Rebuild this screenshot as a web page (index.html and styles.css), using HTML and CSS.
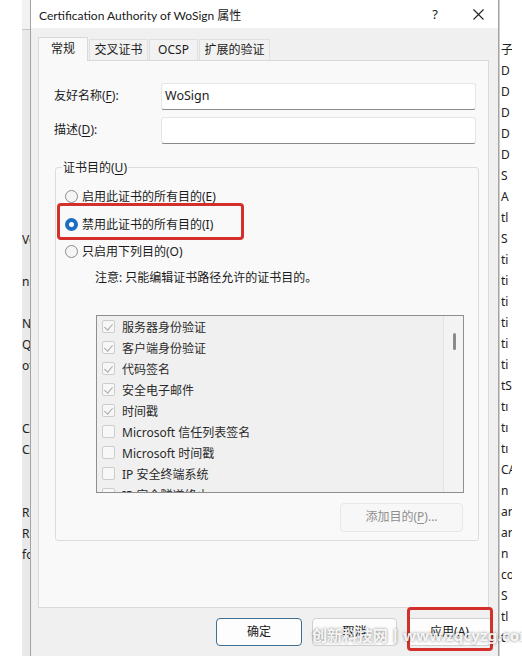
FILE: index.html
```html
<!DOCTYPE html>
<html lang="zh-CN">
<head>
<meta charset="utf-8">
<title>Certification Authority of WoSign 属性</title>
<link rel="stylesheet" href="styles.css">
</head>
<body>
<div class="screen">

    <!-- window behind, left side -->
    <div class="bg-left">
        <div class="bg-band"></div>
        <div class="bg-col">
            <div class="bg-row">Vo</div>
            <div class="bg-row"></div>
            <div class="bg-row">ne</div>
            <div class="bg-row"></div>
            <div class="bg-row">N</div>
            <div class="bg-row">Q</div>
            <div class="bg-row">ot</div>
            <div class="bg-row"></div>
            <div class="bg-row"></div>
            <div class="bg-row">CA</div>
            <div class="bg-row">CA</div>
            <div class="bg-row"></div>
            <div class="bg-row"></div>
            <div class="bg-row">Ro</div>
            <div class="bg-row">Ro</div>
            <div class="bg-row">fo</div>
        </div>
    </div>

    <div class="dialog">
        <div class="titlebar">
            <span class="title">Certification Authority of WoSign 属性</span>
            <span class="tb-btn help">?</span>
            <span class="tb-btn close">
                <svg width="11" height="11" viewBox="0 0 11 11"><path d="M0.5 0.5 L10.5 10.5 M10.5 0.5 L0.5 10.5" stroke="#222" stroke-width="1.1" fill="none"/></svg>
            </span>
        </div>

        <div class="dlg-body">
            <div class="tabs">
                <div class="tab active">常规</div>
                <div class="tab">交叉证书</div>
                <div class="tab">OCSP</div>
                <div class="tab">扩展的验证</div>
            </div>

            <div class="panel">
                <div class="field-row first">
                    <label class="field-label">友好名称(<u>F</u>):</label>
                    <div class="input">WoSign</div>
                </div>
                <div class="field-row">
                    <label class="field-label">描述(<u>D</u>):</label>
                    <div class="input"></div>
                </div>

                <div class="group">
                    <div class="group-title">证书目的(<u>U</u>)</div>

                    <div class="radio-row r1"><span class="radio"></span>启用此证书的所有目的(E)</div>
                    <div class="radio-row r2"><span class="radio on"></span>禁用此证书的所有目的(I)</div>
                    <div class="radio-row r3"><span class="radio"></span>只启用下列目的(O)</div>

                    <div class="note">注意: 只能编辑证书路径允许的证书目的。</div>

                    <div class="listbox">
                        <div class="list-items">
                            <div class="item"><span class="chk on"></span>服务器身份验证</div>
                            <div class="item"><span class="chk on"></span>客户端身份验证</div>
                            <div class="item"><span class="chk on"></span>代码签名</div>
                            <div class="item"><span class="chk on"></span>安全电子邮件</div>
                            <div class="item"><span class="chk on"></span>时间戳</div>
                            <div class="item"><span class="chk"></span>Microsoft 信任列表签名</div>
                            <div class="item"><span class="chk"></span>Microsoft 时间戳</div>
                            <div class="item"><span class="chk"></span>IP 安全终端系统</div>
                            <div class="item"><span class="chk"></span>IP 安全隧道终止</div>
                        </div>
                        <div class="scrollbar"><div class="thumb"></div></div>
                    </div>

                    <div class="add-row">
                        <div class="btn disabled">添加目的(<u>P</u>)...</div>
                    </div>

                    <div class="mark mark-radio"></div>
                </div>
            </div>

            <div class="buttons">
                <div class="btn default">确定</div>
                <div class="btn">取消</div>
                <div class="btn">应用(A)</div>
            </div>
        </div>
    </div>

    <!-- window behind, right side -->
    <div class="bg-right">
        <div class="bg-rcol">
            <div class="bg-rrow">子:</div>
            <div class="bg-rrow">D</div>
            <div class="bg-rrow">D</div>
            <div class="bg-rrow">D</div>
            <div class="bg-rrow">D</div>
            <div class="bg-rrow">D</div>
            <div class="bg-rrow">S</div>
            <div class="bg-rrow">A</div>
            <div class="bg-rrow">tl</div>
            <div class="bg-rrow">S</div>
            <div class="bg-rrow">ti</div>
            <div class="bg-rrow">ti</div>
            <div class="bg-rrow">ti</div>
            <div class="bg-rrow">ti</div>
            <div class="bg-rrow">ti</div>
            <div class="bg-rrow">ti</div>
            <div class="bg-rrow">tS</div>
            <div class="bg-rrow">tı</div>
            <div class="bg-rrow">tı</div>
            <div class="bg-rrow">tı</div>
            <div class="bg-rrow">CA</div>
            <div class="bg-rrow">n</div>
            <div class="bg-rrow">ar</div>
            <div class="bg-rrow">ar</div>
            <div class="bg-rrow">n</div>
            <div class="bg-rrow">co</div>
            <div class="bg-rrow">S</div>
            <div class="bg-rrow">tl</div>
            <div class="bg-rrow">t'</div>
        </div>
    </div>

    <div class="mark mark-apply"></div>
    <div class="watermark">创新科技网丨www.zqcyzg.com</div>
</div>
</body>
</html>
```

FILE: styles.css
```css
body {
    margin: 0;
    font-family: "Noto Sans", "Noto Sans CJK SC", sans-serif;
    font-size: 12px;
    color: #1b1b1b;
    overflow: hidden;
}
u { text-decoration: underline; text-underline-offset: 2px; }

.screen {
    position: relative;
    display: flex;
    width: 522px;
    height: 656px;
    background: #fff;
    overflow: hidden;
}

/* background window bits */
.bg-left {
    width: 30px;
    display: flex;
    background: #fff;
}
.bg-band {
    width: 22px;
}
.bg-col {
    width: 8px;
    background: linear-gradient(#f2f2f2 0, #f2f2f2 29px, #c8c8c8 29px, #c8c8c8 30px, #e9e9e9 30px);
    padding-top: 229px;
    overflow: hidden;
    white-space: nowrap;
    color: #222;
}
.bg-row {
    height: 21px;
    line-height: 21px;
}
.bg-right {
    flex: 1;
    display: flex;
    background: #fff;
}
.bg-rcol {
    width: 11px;
    border-left: 1px solid #cfcfcf;
    padding-top: 39px;
    padding-left: 1px;
    overflow: hidden;
    white-space: nowrap;
    color: #222;
}
.bg-rrow {
    height: 21px;
    line-height: 21px;
}

/* dialog */
.dialog {
    width: 467px;
    border-left: 1px solid #a3a3a3;
    border-right: 1px solid #a3a3a3;
    background: #f0f0f0;
    display: flex;
    flex-direction: column;
}
.titlebar {
    height: 28px;
    background: #fff;
    display: flex;
    align-items: center;
    padding-left: 8px;
}
.title {
    flex: 1;
    font-family: Lato, "Noto Sans CJK SC", sans-serif;
    font-size: 12px;
    color: #1a1a1a;
}
.tb-btn {
    width: 40px;
    text-align: center;
    font-size: 13px;
    color: #222;
}
.help { margin-right: 7px; }
.close { display: flex; justify-content: center; margin-left: -4px; }

.dlg-body {
    padding: 9px 9px 0 7px;
}
.tabs {
    display: flex;
    align-items: flex-end;
    height: 23px;
}
.tab {
    height: 21px;
    line-height: 20px;
    box-sizing: border-box;
    border: 1px solid #e0e0e0;
    border-bottom: none;
    background: #f2f2f2;
    text-align: center;
    margin-right: 1px;
}
.tab:nth-child(2) { width: 59px; }
.tab:nth-child(3) { width: 49px; }
.tab:nth-child(4) { width: 71px; }
.tab.active {
    width: 50px;
    height: 24px;
    line-height: 22px;
    background: #f9f9f9;
    border-color: #d9d9d9;
    margin-bottom: -1px;
    position: relative;
    z-index: 1;
}

.panel {
    height: 548px;
    box-sizing: border-box;
    border: 1px solid #d9d9d9;
    background: #f9f9f9;
}
.field-row {
    display: flex;
    align-items: center;
    margin: 7px 0 0 15px;
}
.field-row.first { margin-top: 22px; }
.field-label {
    width: 107px;
    margin-top: -3px;
}
.input {
    width: 315px;
    height: 27px;
    box-sizing: border-box;
    background: #fff;
    border: 1px solid #e6e6e6;
    border-bottom-color: #8a8a8a;
    border-radius: 3px;
    padding-left: 3px;
    line-height: 24px;
    font-size: 12.5px;
}

.group {
    position: relative;
    margin: 23px 0 0 16px;
    width: 424px;
    height: 374px;
    box-sizing: border-box;
    border: 1px solid #dcdcdc;
    border-radius: 3px;
}
.group-title {
    width: max-content;
    margin: -8px 0 0 6px;
    padding: 0 1px;
    line-height: 16px;
    background: #f9f9f9;
}
.radio-row {
    display: flex;
    align-items: center;
    height: 16px;
    margin: 12px 0 0 9px;
}
.radio-row.r3 { margin-top: 11px; }
.radio {
    width: 13px;
    height: 13px;
    box-sizing: border-box;
    border: 1px solid #8c8c8c;
    border-radius: 50%;
    background: #f5f5f5;
    margin-right: 4px;
}
.radio.on {
    border: 4px solid #1a6fc0;
    background: #fff;
}
.note {
    margin: 11px 0 0 39px;
    line-height: 16px;
}

.listbox {
    display: flex;
    margin: 29px 0 0 40px;
    width: 368px;
    height: 178px;
    box-sizing: border-box;
    border: 1px solid #8f8f8f;
    background: #f0f0f0;
    overflow: hidden;
}
.list-items {
    flex: 1;
    overflow: hidden;
}
.item {
    display: flex;
    align-items: center;
    height: 21px;
    padding-left: 5px;
    white-space: nowrap;
    color: #2a2a2a;
}
.chk {
    position: relative;
    width: 13px;
    height: 13px;
    box-sizing: border-box;
    border: 1px solid #cdcdcd;
    border-radius: 2px;
    background: #f7f7f7;
    margin-right: 7px;
}
.chk.on::after {
    content: "";
    position: absolute;
    left: 3px;
    top: 1px;
    width: 4px;
    height: 7px;
    border: solid #a9a9a9;
    border-width: 0 1.5px 1.5px 0;
    transform: rotate(40deg);
}
.scrollbar {
    width: 19px;
    border-left: 1px solid #e4e4e4;
    background: #f3f3f3;
}
.thumb {
    width: 3px;
    height: 17px;
    margin: 17px 0 0 9px;
    background: #8a8a8a;
    border-radius: 2px;
}

.add-row {
    display: flex;
    justify-content: flex-end;
    margin: 10px 15px 0 0;
}
.btn {
    width: 85px;
    height: 28px;
    box-sizing: border-box;
    border: 1px solid #d0d0d0;
    border-radius: 4px;
    background: #fdfdfd;
    text-align: center;
    line-height: 26px;
}
.btn.disabled {
    width: 123px;
    height: 29px;
    color: #8f8f8f;
    background: #f7f7f7;
    border-color: #e8e8e8;
}
.btn.default {
    width: 86px;
    border-color: #3f6f92;
}

.buttons {
    display: flex;
    justify-content: flex-end;
    gap: 10px;
    margin: 10px -3px 0 0;
}

/* red annotation boxes drawn over the screenshot */
.mark {
    position: absolute;
    border: 3px solid #d3302c;
    border-radius: 4px;
    box-sizing: border-box;
}
.mark-radio {
    left: 1px;
    top: 35px;
    width: 187px;
    height: 37px;
}
.mark-apply {
    left: 407px;
    top: 607px;
    width: 86px;
    height: 44px;
}
.watermark {
    position: absolute;
    left: 312px;
    top: 624px;
    font-size: 15px;
    font-weight: bold;
    color: rgba(255, 255, 255, 0.9);
    text-shadow: 0 0 3px rgba(0, 0, 0, 0.5);
    white-space: nowrap;
    letter-spacing: 0.2px;
}
```
